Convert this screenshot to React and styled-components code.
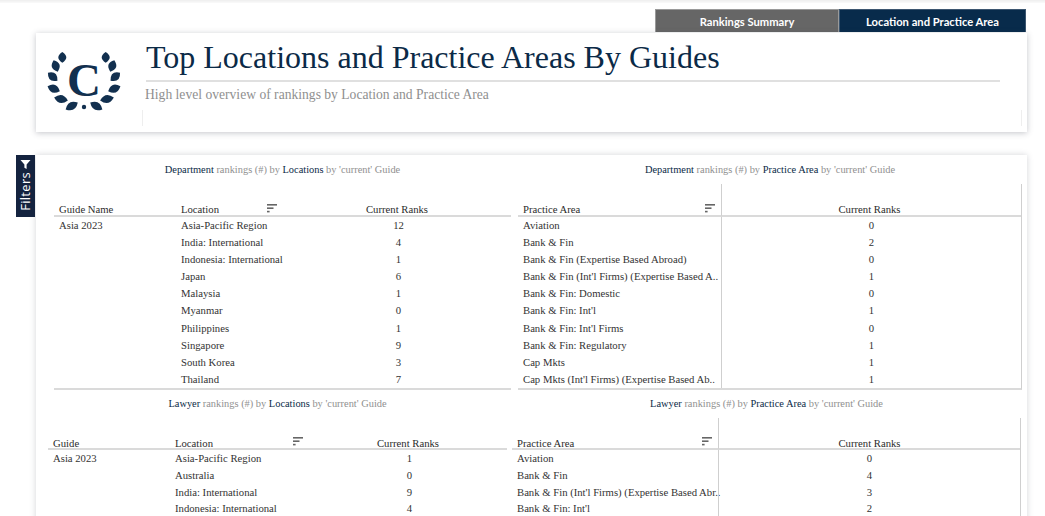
import React from "react";
import styled, { createGlobalStyle } from "styled-components";

const NAVY = "#0b2a47";

const GlobalStyle = createGlobalStyle`
  html, body {
    margin: 0;
    padding: 0;
    background: #fff;
  }
  body {
    font-family: "Liberation Serif", "Times New Roman", serif;
  }
`;

const Page = styled.div`
  width: 1045px;
  height: 516px;
  overflow: hidden;
`;

const TopStrip = styled.div`
  height: 3px;
  background: linear-gradient(#eeeeee, #fafafa);
`;

const TabBar = styled.nav`
  display: flex;
  justify-content: flex-end;
  margin-top: 6px;
  padding-right: 19px;
`;

const Tab = styled.div`
  width: ${(p) => p.$width}px;
  height: 23px;
  box-sizing: border-box;
  display: flex;
  align-items: center;
  justify-content: center;
  background: ${(p) => (p.$active ? "#082b4b" : "#666666")};
  border: 1px solid ${(p) => (p.$active ? "#3c5670" : "#9a9a9a")};
  border-bottom: 0;
  color: #fff;
  font-family: Lato, "Liberation Sans", sans-serif;
  font-weight: 700;
  font-size: 11.2px;
`;

const HeaderCard = styled.header`
  position: relative;
  display: flex;
  height: 99px;
  margin: 1px 18px 0 36px;
  background: #fff;
  box-shadow: 0 1px 6px rgba(60, 64, 80, 0.3);

  &::before,
  &::after {
    content: "";
    position: absolute;
    top: 77px;
    height: 16px;
    width: 1px;
    background: #eeeeee;
  }
  &::before {
    left: 106px;
  }
  &::after {
    right: 5px;
  }
`;

const LogoBox = styled.div`
  width: 110px;
  flex: none;
  padding-top: 18px;
  box-sizing: border-box;
`;

const HeadText = styled.div`
  flex: 1;
  padding-right: 27px;
`;

const Title = styled.h1`
  margin: 0;
  height: 49px;
  padding-top: 5px;
  box-sizing: border-box;
  border-bottom: 2px solid #e0e0e0;
  color: ${NAVY};
  font-weight: 400;
  font-size: 32px;
  line-height: 38px;
  white-space: nowrap;
`;

const SubTitle = styled.p`
  margin: 5px 0 0 -1px;
  color: #8f8f8f;
  font-size: 13.6px;
  line-height: 16px;
`;

const Panel = styled.main`
  position: relative;
  margin: 23px 18px 0 36px;
  height: 400px;
  background: #fff;
  box-shadow: 0 0 6px rgba(60, 64, 80, 0.22);
`;

const FiltersTab = styled.div`
  position: absolute;
  left: -20px;
  top: 0;
  width: 19px;
  height: 62px;
  display: flex;
  flex-direction: column;
  align-items: center;
  gap: 2px;
  padding-top: 4px;
  box-sizing: border-box;
  background: #14233f;
  color: #fff;
`;

const FiltersLabel = styled.span`
  writing-mode: vertical-rl;
  transform: rotate(180deg);
  font-family: "Open Sans", "Liberation Sans", sans-serif;
  font-size: 13px;
  line-height: 19px;
  letter-spacing: 0.3px;
`;

const ChartRow = styled.section`
  display: flex;
  gap: ${(p) => p.$gap}px;
  padding-left: ${(p) => p.$left}px;
`;

const ChartBlock = styled.div`
  width: ${(p) => p.$width}px;
  flex: none;
`;

const ChartTitle = styled.div`
  height: ${(p) => (p.$lower ? 28 : 29)}px;
  padding-top: ${(p) => (p.$lower ? 7 : 8)}px;
  box-sizing: border-box;
  text-align: center;
  font-size: 10.4px;
  line-height: 14px;
  color: #909090;
  white-space: nowrap;

  b {
    font-weight: 400;
    color: ${NAVY};
  }
`;

const Table = styled.div`
  display: grid;
  grid-template-columns: ${(p) => p.$cols};
  border-bottom: ${(p) => (p.$closed ? "2px solid #dadada" : "0")};
  ${(p) => (p.$framed ? "border-right: 1px solid #cfcfcf;" : "")}
`;

const HeadCell = styled.div`
  display: flex;
  align-items: flex-end;
  justify-content: ${(p) => (p.$center ? "center" : "flex-start")};
  height: ${(p) => (p.$tight ? 32 : 33)}px;
  padding: 0 ${(p) => p.$right}px 0 ${(p) => (p.$center ? 0 : 5)}px;
  box-sizing: border-box;
  border-bottom: 2px solid #dadada;
  ${(p) => (p.$divider ? "border-left: 1px solid #cfcfcf;" : "")}
  font-size: 10.7px;
  line-height: ${(p) => (p.$tight ? 9 : 11)}px;
  color: #2c2c2c;
  white-space: nowrap;

  svg {
    margin-left: auto;
    margin-bottom: 2px;
  }
`;

const Cell = styled.div`
  height: ${(p) => p.$height}px;
  line-height: ${(p) => p.$height}px;
  padding-left: ${(p) => p.$left}px;
  ${(p) => (p.$divider ? "border-left: 1px solid #cfcfcf;" : "")}
  text-align: ${(p) => (p.$center ? "center" : "left")};
  font-size: 10.7px;
  color: #333333;
  white-space: nowrap;
`;

const SortIcon = () => (
  <svg width="10" height="9" viewBox="0 0 10 9">
    <rect x="0" y="0" width="10" height="1.6" fill="#666" />
    <rect x="0" y="3.4" width="6.5" height="1.6" fill="#666" />
    <rect x="0" y="6.8" width="2.6" height="1.6" fill="#666" />
  </svg>
);

const FunnelIcon = () => (
  <svg width="11" height="11" viewBox="0 0 11 11">
    <path d="M0.5 1 H10.5 L6.6 5.6 V10 L4.4 8.8 V5.6 Z" fill="#fff" />
  </svg>
);

// wreath leaves, left half: cx, cy, half length, tilt; the right half is mirrored
const LEAVES = [
  [26.3, 6.3, 5.4, 0],
  [19.7, 15, 6, -20],
  [16.7, 25.7, 6.2, -50],
  [17.7, 37.7, 6.6, -68],
  [25, 48, 7, -78],
  [35.7, 55, 7, 60],
];

const leafPath = (h) => `M0 ${-h} Q8 0 0 ${h} Q-8 0 0 ${-h} Z`;

const Logo = () => (
  <svg width="96" height="68" viewBox="0 0 96 68">
    <g fill="#12304f">
      {LEAVES.map(([x, y, h, a]) => (
        <React.Fragment key={x}>
          <path d={leafPath(h)} transform={`translate(${x} ${y}) rotate(${a})`} />
          <path d={leafPath(h)} transform={`translate(${96 - x} ${y}) rotate(${-a})`} />
        </React.Fragment>
      ))}
      <circle cx="48" cy="56" r="2.2" />
      <text
        x="48"
        y="45"
        textAnchor="middle"
        fontFamily="Liberation Serif, serif"
        fontWeight="700"
        fontSize="47"
      >
        C
      </text>
    </g>
  </svg>
);

function RankTable({ cols, headers, rows, sortAt, rowHeight, framed, closed, tight, numLeft = 0, headRight = 0 }) {
  const last = headers.length - 1;
  return (
    <Table $cols={cols} $framed={framed} $closed={closed}>
      {headers.map((h, i) => (
        <HeadCell
          key={h}
          $tight={tight}
          $center={i === last}
          $divider={framed && i === last}
          $right={i === sortAt ? 6 : i === last ? headRight : 0}
        >
          {h}
          {i === sortAt && <SortIcon />}
        </HeadCell>
      ))}
      {rows.map((row, r) =>
        row.map((value, i) => (
          <Cell
            key={`${r}-${i}`}
            $height={rowHeight}
            $center={i === last}
            $left={i === last ? numLeft : 5}
            $divider={framed && i === last}
          >
            {value}
          </Cell>
        ))
      )}
    </Table>
  );
}

const deptLocations = [
  ["Asia 2023", "Asia-Pacific Region", 12],
  ["", "India: International", 4],
  ["", "Indonesia: International", 1],
  ["", "Japan", 6],
  ["", "Malaysia", 1],
  ["", "Myanmar", 0],
  ["", "Philippines", 1],
  ["", "Singapore", 9],
  ["", "South Korea", 3],
  ["", "Thailand", 7],
];

const deptAreas = [
  ["Aviation", 0],
  ["Bank & Fin", 2],
  ["Bank & Fin (Expertise Based Abroad)", 0],
  ["Bank & Fin (Int'l Firms) (Expertise Based A..", 1],
  ["Bank & Fin: Domestic", 0],
  ["Bank & Fin: Int'l", 1],
  ["Bank & Fin: Int'l Firms", 0],
  ["Bank & Fin: Regulatory", 1],
  ["Cap Mkts", 1],
  ["Cap Mkts (Int'l Firms) (Expertise Based Ab..", 1],
];

const lawyerLocations = [
  ["Asia 2023", "Asia-Pacific Region", 1],
  ["", "Australia", 0],
  ["", "India: International", 9],
  ["", "Indonesia: International", 4],
];

const lawyerAreas = [
  ["Aviation", 0],
  ["Bank & Fin", 4],
  ["Bank & Fin (Int'l Firms) (Expertise Based Abr..", 3],
  ["Bank & Fin: Int'l", 2],
];

export default function App() {
  return (
    <Page>
      <GlobalStyle />
      <TopStrip />
      <TabBar>
        <Tab $width={184}>Rankings Summary</Tab>
        <Tab $width={187} $active>
          Location and Practice Area
        </Tab>
      </TabBar>

      <HeaderCard>
        <LogoBox>
          <Logo />
        </LogoBox>
        <HeadText>
          <Title>Top Locations and Practice Areas By Guides</Title>
          <SubTitle>High level overview of rankings by Location and Practice Area</SubTitle>
        </HeadText>
      </HeaderCard>

      <Panel>
        <FiltersTab>
          <FunnelIcon />
          <FiltersLabel>Filters</FiltersLabel>
        </FiltersTab>

        <ChartRow $left={18} $gap={7}>
          <ChartBlock $width={457}>
            <ChartTitle>
              <b>Department</b> rankings (#) by <b>Locations</b> by 'current' Guide
            </ChartTitle>
            <RankTable
              cols="122px 107px 228px"
              headers={["Guide Name", "Location", "Current Ranks"]}
              rows={deptLocations}
              sortAt={1}
              rowHeight={17.1}
              numLeft={3}
              closed
            />
          </ChartBlock>
          <ChartBlock $width={504}>
            <ChartTitle>
              <b>Department</b> rankings (#) by <b>Practice Area</b> by 'current' Guide
            </ChartTitle>
            <RankTable
              cols="203px 300px"
              headers={["Practice Area", "Current Ranks"]}
              rows={deptAreas}
              sortAt={0}
              rowHeight={17.1}
              headRight={4}
              framed
              closed
            />
          </ChartBlock>
        </ChartRow>

        <ChartRow $left={12} $gap={5}>
          <ChartBlock $width={459}>
            <ChartTitle $lower>
              <b>Lawyer</b> rankings (#) by <b>Locations</b> by 'current' Guide
            </ChartTitle>
            <RankTable
              cols="122px 139px 198px"
              headers={["Guide", "Location", "Current Ranks"]}
              rows={lawyerLocations}
              sortAt={1}
              rowHeight={16.8}
              numLeft={3}
              tight
            />
          </ChartBlock>
          <ChartBlock $width={509}>
            <ChartTitle $lower>
              <b>Lawyer</b> rankings (#) by <b>Practice Area</b> by 'current' Guide
            </ChartTitle>
            <RankTable
              cols="206px 302px"
              headers={["Practice Area", "Current Ranks"]}
              rows={lawyerAreas}
              sortAt={0}
              rowHeight={16.8}
              framed
              tight
            />
          </ChartBlock>
        </ChartRow>
      </Panel>
    </Page>
  );
}
